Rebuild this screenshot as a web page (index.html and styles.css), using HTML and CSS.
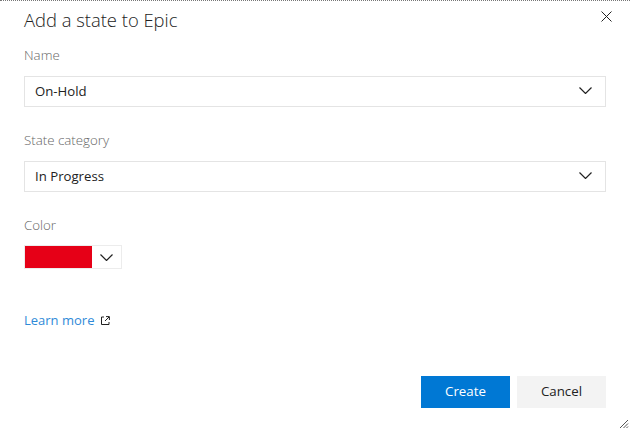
FILE: index.html
```html
<!DOCTYPE html>
<html lang="en">
<head>
  <meta charset="UTF-8">
  <meta name="viewport" content="width=device-width, initial-scale=1.0">
  <title>Add a state to Epic</title>
  <link rel="stylesheet" href="styles.css">
</head>
<body>
<div class="dialog">
  <div class="dialog-header">
    <h1>Add a state to Epic</h1>
    <button class="close-button" type="button" aria-label="Close">
      <svg width="11" height="11" viewBox="0 0 11 11"><path d="M0.5 0.5L10.5 10.5M10.5 0.5L0.5 10.5"/></svg>
    </button>
  </div>

  <div class="form-group">
    <div class="field-label">Name</div>
    <div class="dropdown">
      <span>On-Hold</span>
      <svg class="chevron" width="13" height="7" viewBox="0 0 13 7"><path d="M0.5 0.5L6.5 6.5L12.5 0.5"/></svg>
    </div>
  </div>

  <div class="form-group">
    <div class="field-label">State category</div>
    <div class="dropdown">
      <span>In Progress</span>
      <svg class="chevron" width="13" height="7" viewBox="0 0 13 7"><path d="M0.5 0.5L6.5 6.5L12.5 0.5"/></svg>
    </div>
  </div>

  <div class="form-group color-group">
    <div class="field-label">Color</div>
    <div class="color-picker">
      <div class="color-swatch"></div>
      <div class="color-toggle">
        <svg class="chevron" width="13" height="7" viewBox="0 0 13 7"><path d="M0.5 0.5L6.5 6.5L12.5 0.5"/></svg>
      </div>
    </div>
  </div>

  <div class="learn-more">
    <a href="#">Learn more</a>
    <svg class="external" width="9" height="9" viewBox="0 0 9 9"><path d="M3 1H0.5V8.5H8V6M4 5L8 1M5 0.6H8.4V4"/></svg>
  </div>

  <div class="dialog-footer">
    <button class="btn btn-primary" type="button">Create</button>
    <button class="btn" type="button">Cancel</button>
  </div>

  <svg class="resize-grip" width="10" height="10" viewBox="0 0 10 10"><path d="M1 9L9 1M4.5 9L9 4.5M7.5 9L9 7.5"/></svg>
</div>
</body>
</html>
```

FILE: styles.css
```css
* {
  margin: 0;
  padding: 0;
  box-sizing: border-box;
}

body {
  font-family: 'Open Sans', 'Noto Sans', sans-serif;
  background: #fff;
  color: #222;
  overflow: hidden;
}

.dialog {
  position: relative;
  width: 630px;
  height: 430px;
  padding: 0 24px;
  border-top: 1px dotted #777;
  display: flex;
  flex-direction: column;
}

.dialog-header {
  display: flex;
  justify-content: space-between;
  align-items: flex-start;
  height: 44px;
  padding-top: 6px;
}

.dialog-header h1 {
  font-size: 18.4px;
  font-weight: 300;
  line-height: 26px;
  color: #222;
}

.close-button {
  border: none;
  background: none;
  margin-top: 4px;
  margin-right: -6px;
  height: 11px;
  display: flex;
}

.close-button path {
  fill: none;
  stroke: #222;
  stroke-width: 1;
}

.form-group {
  margin-bottom: 23px;
}

.field-label {
  font-size: 13.3px;
  font-weight: 300;
  line-height: 20px;
  color: #666;
  margin-bottom: 11px;
}

.color-group .field-label {
  margin-bottom: 10px;
}

.dropdown {
  height: 31px;
  border: 1px solid #e4e4e4;
  display: flex;
  justify-content: space-between;
  align-items: center;
  padding: 0 13px 2px 10px;
  font-size: 13.2px;
}

.chevron {
  display: block;
}

.chevron path {
  fill: none;
  stroke: #222;
  stroke-width: 1.2;
}

.color-picker {
  display: flex;
  width: 98px;
  height: 24px;
  border: 1px solid #ececec;
}

.color-swatch {
  width: 67px;
  background: #e60017;
}

.color-toggle {
  flex: 1;
  display: flex;
  align-items: center;
  justify-content: center;
  padding-right: 1px;
}

.learn-more {
  display: flex;
  align-items: center;
  gap: 7px;
  margin-top: 18px;
  font-size: 13px;
  line-height: 20px;
}

.learn-more a {
  color: #2f8ad8;
  text-decoration: none;
}

.external path {
  fill: none;
  stroke: #222;
  stroke-width: 1;
}

.dialog-footer {
  display: flex;
  justify-content: flex-end;
  gap: 7px;
  margin-top: 46px;
}

.btn {
  width: 89px;
  height: 32px;
  padding-bottom: 2px;
  border: none;
  background: #f3f3f3;
  color: #222;
  font-family: inherit;
  font-size: 13.3px;
  font-weight: 500;
}

.btn-primary {
  background: #0078d4;
  color: #fff;
}

/* sits in the dialog corner, over everything else */
.resize-grip {
  position: absolute;
  right: 1px;
  bottom: 1px;
}

.resize-grip path {
  fill: none;
  stroke: #555;
  stroke-width: 1;
}
```
